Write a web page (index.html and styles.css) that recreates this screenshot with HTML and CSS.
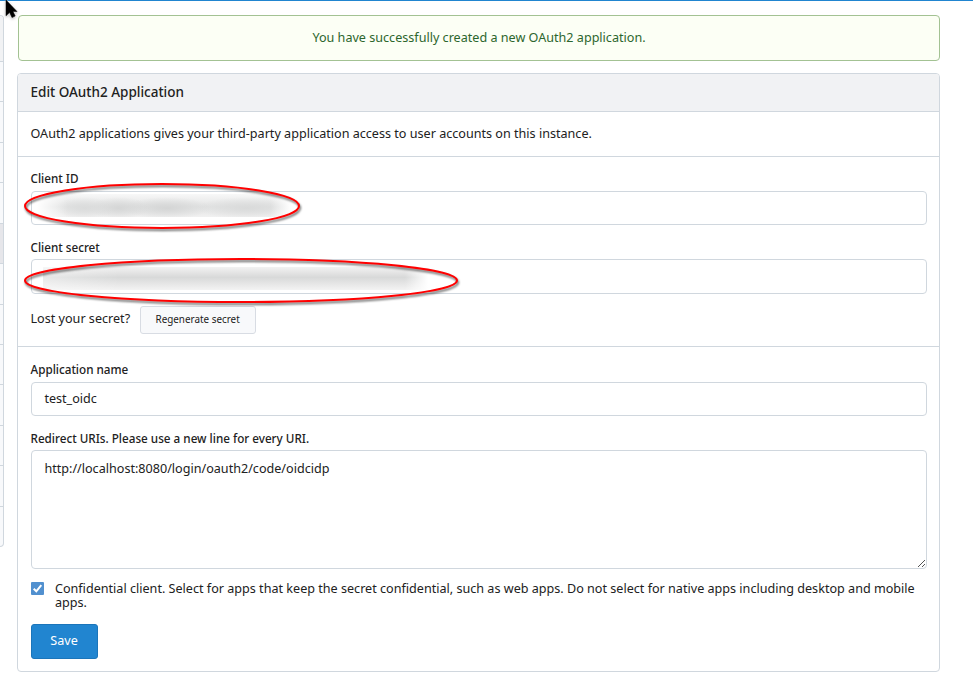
FILE: index.html
```html
<!DOCTYPE html>
<html lang="en">
<head>
<meta charset="utf-8">
<title>Edit OAuth2 Application</title>
<link rel="stylesheet" href="styles.css">
</head>
<body>
<div class="page">
  <nav class="side">
    <div class="side-item side-head"></div>
    <div class="side-item"></div>
    <div class="side-item"></div>
    <div class="side-item"></div>
    <div class="side-item"></div>
    <div class="side-item active"></div>
    <div class="side-item"></div>
    <div class="side-item"></div>
    <div class="side-item"></div>
    <div class="side-item"></div>
    <div class="side-item"></div>
    <div class="side-item"></div>
    <div class="side-item"></div>
  </nav>
  <main class="content">
    <div class="message"><span>You have successfully created a new OAuth2 application.</span></div>
    <div class="panel">
      <h4 class="header"><span>Edit OAuth2 Application</span></h4>
      <section class="intro"><span>OAuth2 applications gives your third-party application access to user accounts on this instance.</span></section>
      <section class="secrets">
        <label class="label"><span>Client ID</span></label>
        <div class="input id-input"><div class="smudge smudge-id"></div></div>
        <label class="label second"><span>Client secret</span></label>
        <div class="input secret-input"><div class="smudge smudge-secret"></div></div>
        <div class="lost"><span class="lost-text">Lost your secret?</span><button class="regen">Regenerate secret</button></div>
      </section>
      <form class="form">
        <label class="label"><span>Application name</span></label>
        <div class="input name-input"><span>test_oidc</span></div>
        <label class="label second"><span>Redirect URIs. Please use a new line for every URI.</span></label>
        <div class="input area"><span>http://localhost:8080/login/oauth2/code/oidcidp</span>
          <svg class="grip" width="9" height="9" viewBox="0 0 9 9"><path d="M1 8L8 1M5 8L8 5"/></svg>
        </div>
        <div class="check">
          <svg class="box" width="13" height="13" viewBox="0 0 13 13"><rect width="13" height="13" rx="1" fill="#5190cf"/><path d="M2.7 6.8L5.3 9.3L10.3 3.2" fill="none" stroke="#fff" stroke-width="2"/></svg>
          <span>Confidential client. Select for apps that keep the secret confidential, such as web apps. Do not select for native apps including desktop and mobile apps.</span>
        </div>
        <button class="save" type="button">Save</button>
      </form>
    </div>
  </main>
</div>
<svg class="marks" width="973" height="694" viewBox="0 0 973 694">
  <g class="mark"><ellipse cx="162" cy="206" rx="137" ry="22"/><ellipse cx="241" cy="280.5" rx="216" ry="21.5"/></g>
  <path class="pointer" d="M6 0V15.8L9.6 12.6L12 17.6L15.2 16L13 11.5H17Z"/>
</svg>
</body>
</html>
```

FILE: styles.css
```css
* { box-sizing: border-box; }
body {
  margin: 0;
  height: 694px;
  overflow: hidden;
  background: #fff;
  border-top: 1px solid #2185d0;
  font-family: "Noto Sans", sans-serif;
  font-size: 12.6px;
  line-height: 14px;
  color: #212121;
}
.page { display: flex; align-items: flex-start; padding-top: 14px; }
.side {
  width: 4px;
  height: 532px;
  display: flex;
  flex-direction: column;
  border: 1px solid #d0d7de;
  border-left: 0;
  border-radius: 0 4px 4px 0;
  background: #f8f9fb;
  overflow: hidden;
}
.side-item { flex: 1; border-bottom: 1px solid #d0d7de; }
.side-item:last-child { border-bottom: 0; }
.side-head { flex: 0 0 46px; background: #f1f2f4; }
.side-item.active { background: #e6e6ea; }
.content { width: 923px; margin-left: 13px; }
.message {
  height: 46px;
  margin: 0 0 12px 1px;
  display: flex;
  justify-content: center;
  padding-top: 15px;
  border: 1px solid #a3c293;
  border-radius: 4px;
  background: #fcfff5;
  color: #2c662d;
}
.panel { height: 599px; border: 1px solid #d0d7de; border-radius: 4px; overflow: hidden; }
.header {
  margin: 0;
  height: 38px;
  padding: 11px 12.5px;
  background: #f1f2f4;
  border-bottom: 1px solid #d0d7de;
  font-size: 13.5px;
  font-weight: 500;
}
.intro { height: 45px; padding: 15px 12.5px; border-bottom: 1px solid #d0d7de; }
.secrets { height: 190px; padding: 14px 12px 0 13px; border-bottom: 1px solid #d0d7de; }
.form { padding: 15px 12px 0 13px; }
.label { display: block; height: 20px; margin-left: -.5px; font-size: 11.7px; font-weight: 500; }
.label.second { height: 19px; }
.input { border: 1px solid #d0d7de; border-radius: 4px; padding: 9px 12.4px; background: #fff; }
.id-input { height: 34px; margin-bottom: 15px; padding: 2px 5px; }
.secret-input { height: 35px; padding: 7px 11px; }
.smudge { height: 23px; }
.smudge-id {
  width: 254px;
  background: linear-gradient(90deg, #fff 0, transparent 12%, transparent 92%, #fff 100%), radial-gradient(ellipse 30px 11px at 48px 14px, #dadbdb 0, transparent 100%), radial-gradient(ellipse 30px 11px at 82px 14px, #d5d6d6 0, transparent 100%), radial-gradient(ellipse 44px 11px at 130px 14px, #d4d5d5 0, transparent 100%), radial-gradient(ellipse 50px 11px at 210px 14px, #d9dada 0, transparent 100%), linear-gradient(180deg, #f8f8f8 0, #e2e3e3 55%, #f1f1f1 100%);
}
.smudge-secret {
  width: 385px;
  background: linear-gradient(90deg, transparent 94%, #fff 100%), linear-gradient(90deg, rgba(255,255,255,.4) 0, transparent 20%), linear-gradient(180deg, #f2f2f2 0, #d8d9d9 45%, #e7e7e7 75%, #f3f3f3 100%);
}
.lost { display: flex; align-items: flex-start; margin-top: 12px; }
.lost-text { padding-top: 6px; margin-left: -.5px; }
.regen {
  width: 116px;
  height: 28px;
  margin-left: 9.5px;
  padding: 0 0 2px;
  border: 1px solid #d8dce3;
  border-radius: 3px;
  background: #f8f9fb;
  color: #212121;
  font: 9.9px/14px "Noto Sans", sans-serif;
}
.name-input { height: 34px; margin-bottom: 15px; }
.area { position: relative; height: 119px; padding-top: 11px; }
.grip { position: absolute; right: 0; bottom: 0; fill: none; stroke: #555; stroke-width: 1; }
.check { display: flex; align-items: flex-start; gap: 11px; margin-top: 13px; }
.box { flex: none; }
.save {
  display: block;
  width: 67px;
  height: 35px;
  margin-top: 14px;
  padding: 0 1px 1px 0;
  border: 1px solid #1b75ba;
  border-radius: 3px;
  background: #2185d0;
  color: #fff;
  font: 12.6px/14px "Noto Sans", sans-serif;
}
.marks { position: absolute; left: 0; top: 0; pointer-events: none; }
.mark { fill: none; stroke: #f00; stroke-width: 2; filter: drop-shadow(1.5px 2px 1px rgba(0,0,0,.6)); }
.pointer { fill: #000; stroke: #000; stroke-width: .5; filter: drop-shadow(0 0 1px #fff) drop-shadow(0 1px 1px rgba(0,0,0,.3)); }
```
